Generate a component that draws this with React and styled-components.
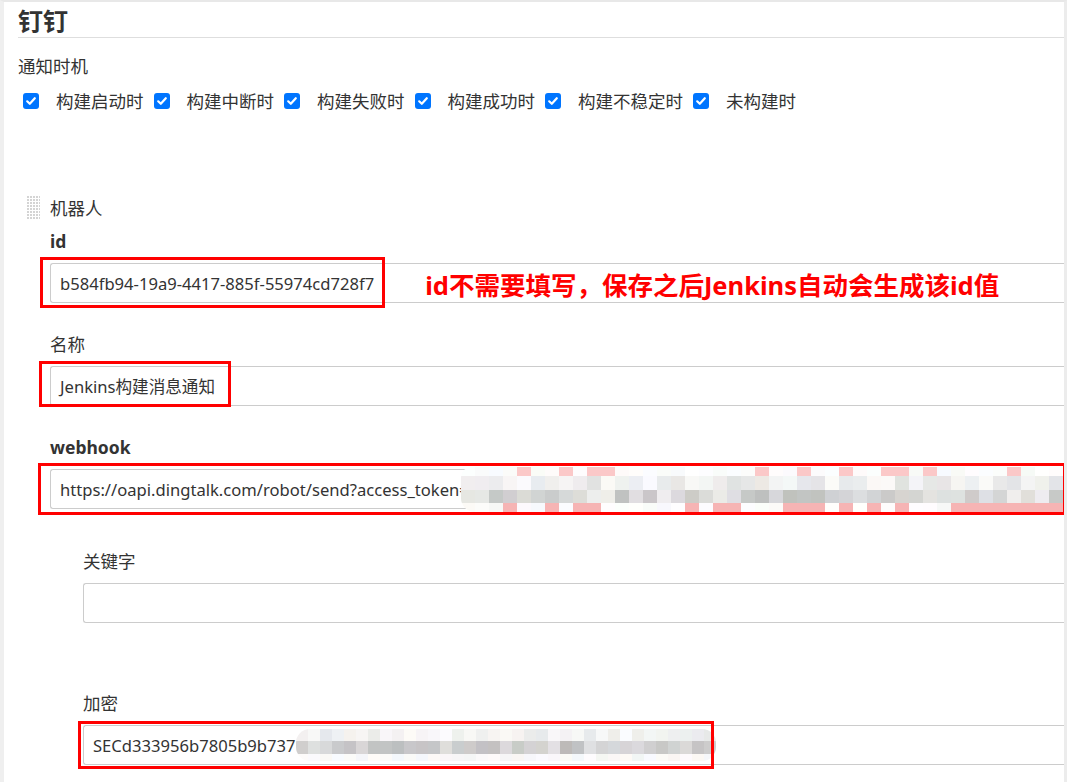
import React from "react";
import styled, { createGlobalStyle } from "styled-components";

const GlobalStyle = createGlobalStyle`
	html, body {
		margin: 0;
		padding: 0;
		background: #fff;
	}
	body {
		font-family: "Noto Sans", "Noto Sans CJK SC", sans-serif;
		color: #333;
	}
`;

// pseudo random so the mosaic stays the same on every run
const makeRand = (seed) => {
	let s = seed;
	return () => {
		s = (s * 9301 + 49297) % 233280;
		return s / 233280;
	};
};

const gray = (r, lo, hi) => {
	const v = Math.round(lo + r() * (hi - lo));
	const t = Math.round((r() - 0.5) * 8);
	return `rgb(${v + t}, ${v}, ${v + Math.round((r() - 0.5) * 10)})`;
};

const buildMosaic = (seed, cols, rows) => {
	const r = makeRand(seed);
	return rows.map((row) =>
		Array.from({ length: cols }, () => {
			if (row.pink && r() < row.pink) return row.pinkColor || "#f6b4b4";
			return gray(r, row.lo, row.hi);
		})
	);
};

const webhookCells = buildMosaic(
	17,
	44,
	[
		{ lo: 250, hi: 255, pink: 0.25, pinkColor: "#fbc8c8" },
		{ lo: 226, hi: 252 },
		{ lo: 192, hi: 240 },
		{ lo: 248, hi: 255, pink: 0.35 },
	]
);

const secretCells = buildMosaic(
	5,
	35,
	[
		{ lo: 232, hi: 252 },
		{ lo: 185, hi: 225 },
		{ lo: 246, hi: 252 },
	]
);

const triggers = [
	"构建启动时",
	"构建中断时",
	"构建失败时",
	"构建成功时",
	"构建不稳定时",
	"未构建时",
];

const CheckIcon = () => (
	<svg width="12" height="12" viewBox="0 0 12 12">
		<path
			d="M2.2 6.3 L4.8 8.8 L9.8 3.2"
			fill="none"
			stroke="#fff"
			strokeWidth="2.2"
			strokeLinecap="round"
			strokeLinejoin="round"
		/>
	</svg>
);

const Mosaic = ({ cells, cellWidth, heights, $rounded, $shift }) => (
	<MosaicGrid
		$cols={cells[0].length}
		$w={cellWidth}
		$rows={heights.map((h) => `${h}px`).join(" ")}
		$rounded={$rounded}
		$shift={$shift}
	>
		{cells.map((row, i) =>
			row.map((c, j) => <MosaicCell key={`${i}-${j}`} style={{ background: c }} />)
		)}
	</MosaicGrid>
);

const App = () => {
	return (
		<>
			<GlobalStyle />
			<Page>
				<Header>钉钉</Header>
				<Label>通知时机</Label>
				<Triggers>
					{triggers.map((t) => (
						<Trigger key={t}>
							<Check>
								<CheckIcon />
							</Check>
							<span>{t}</span>
						</Trigger>
					))}
				</Triggers>

				<Robot>
					<Handle />
					<RobotBody>
						<Label>机器人</Label>

						<Field $top={9}>
							<Label $bold>id</Label>
							<InputWrap>
								<TextBox>
									b584fb94-19a9-4417-885f-55974cd728f7
									<Note>id不需要填写，保存之后Jenkins自动会生成该id值</Note>
								</TextBox>
								<Highlight $left={-10} $top={-6} $width={345} $height={51} />
							</InputWrap>
						</Field>

						<Field $top={29}>
							<Label>名称</Label>
							<InputWrap>
								<TextBox>Jenkins构建消息通知</TextBox>
								<Highlight $left={-11} $top={-5} $width={192} $height={46} />
							</InputWrap>
						</Field>

						<Field $top={29}>
							<Label $bold>webhook</Label>
							<InputWrap>
								<TextBox>
									https://oapi.dingtalk.com/robot/send?access_token=
									<Mosaic
										cells={webhookCells}
										cellWidth={14}
										heights={[9, 14, 13, 9]}
										$shift={-8}
									/>
								</TextBox>
								<Highlight $left={-12} $top={-6} $width={1028} $height={52} />
							</InputWrap>
						</Field>

						<Nested>
							<Field $top={40}>
								<Label>关键字</Label>
								<InputWrap>
									<TextBox />
								</InputWrap>
							</Field>

							<Field $top={68}>
								<Label>加密</Label>
								<InputWrap>
									<TextBox>
										SECd333956b7805b9b737
										<Mosaic cells={secretCells} cellWidth={12} heights={[12, 13, 7]} $rounded />
									</TextBox>
									<Highlight $left={-5} $top={-4} $width={636} $height={48} />
								</InputWrap>
							</Field>
						</Nested>
					</RobotBody>
				</Robot>
			</Page>
		</>
	);
};

const Page = styled.div`
	box-sizing: border-box;
	width: 1067px;
	height: 782px;
	overflow: hidden;
	border-top: 2px solid #e8e8e8;
	border-left: 4px solid #efefef;
	border-right: 3px solid #ececec;
	padding-left: 14px;
`;

const Header = styled.h1`
	margin: 0;
	padding-top: 3px;
	font-size: 25px;
	line-height: 32px;
	font-weight: 700;
	color: #333;
	border-bottom: 1px solid #dedede;
	margin-bottom: 16px;
`;

const Label = styled.div`
	font-size: 17.5px;
	line-height: 24px;
	font-weight: ${(p) => (p.$bold ? 700 : 400)};
	color: #333;
`;

const Triggers = styled.div`
	display: flex;
	align-items: center;
	gap: 10px;
	margin-top: 11px;
	margin-left: 5px;
	font-size: 17.5px;
	line-height: 24px;
`;

const Trigger = styled.label`
	display: flex;
	align-items: center;
	gap: 17px;
`;

const Check = styled.span`
	display: flex;
	align-items: center;
	justify-content: center;
	width: 16px;
	height: 16px;
	border-radius: 3px;
	background: #0075ff;
`;

const Robot = styled.div`
	display: flex;
	align-items: flex-start;
	gap: 10px;
	margin-top: 83px;
	margin-left: 8px;
`;

const Handle = styled.div`
	flex: 0 0 14px;
	height: 25px;
	margin-top: -1px;
	background-color: #d4d4d4;
	background-image: linear-gradient(to right, #fff 1px, transparent 1px),
		linear-gradient(to bottom, #fff 1px, transparent 1px);
	background-size: 3px 3px;
`;

const RobotBody = styled.div`
	flex: 1;
	min-width: 0;
`;

const Nested = styled.div`
	margin-left: 33px;
`;

const Field = styled.div`
	margin-top: ${(p) => p.$top}px;
`;

const InputWrap = styled.div`
	position: relative;
	margin-top: 10px;
`;

const TextBox = styled.div`
	box-sizing: border-box;
	display: flex;
	align-items: center;
	height: 40px;
	padding-left: 9px;
	border: 1px solid #cccccc;
	border-right: none;
	border-radius: 3px 0 0 3px;
	font-size: 16.6px;
	color: #333;
	white-space: nowrap;
`;

const Note = styled.span`
	margin-left: 51px;
	font-size: 25.5px;
	font-weight: 700;
	color: #ff0000;
`;

const Highlight = styled.div`
	position: absolute;
	left: ${(p) => p.$left}px;
	top: ${(p) => p.$top}px;
	width: ${(p) => p.$width}px;
	height: ${(p) => p.$height}px;
	box-sizing: border-box;
	border: 3px solid #ff0000;
	pointer-events: none;
`;

const MosaicGrid = styled.div`
	display: grid;
	grid-template-columns: repeat(${(p) => p.$cols}, ${(p) => p.$w}px);
	grid-template-rows: ${(p) => p.$rows};
	margin-left: ${(p) => p.$shift || 0}px;
	border-radius: ${(p) => (p.$rounded ? "14px" : "10px 0 0 14px")};
	overflow: hidden;
	flex-shrink: 0;
`;

const MosaicCell = styled.div``;

export default App;
